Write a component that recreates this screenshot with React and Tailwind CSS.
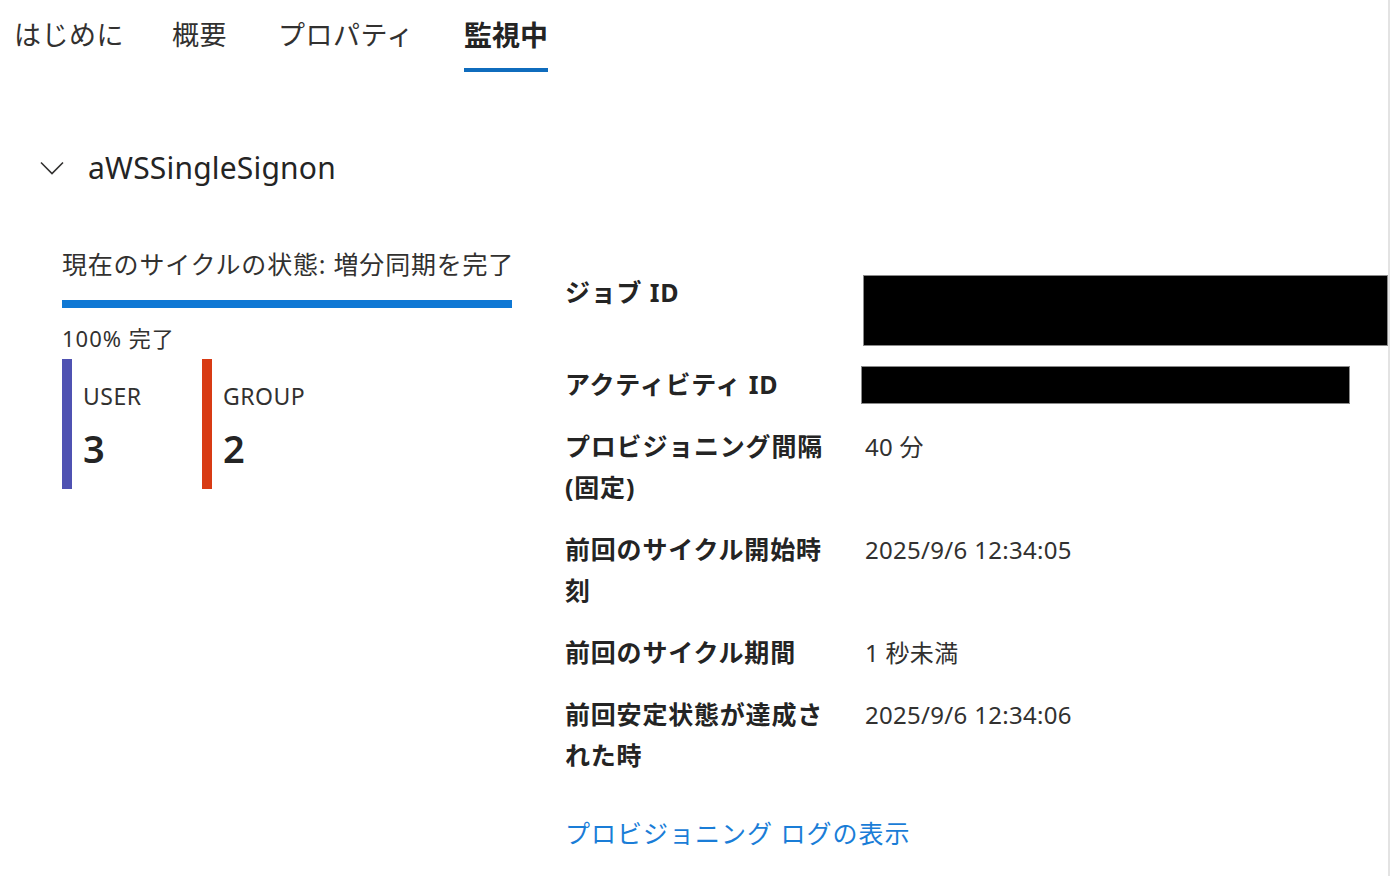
import React from 'react';

const TABS = [
  { label: 'はじめに', width: 'w-[108px]', active: false },
  { label: '概要', width: 'w-[56px]', active: false },
  { label: 'プロパティ', width: 'w-[136px]', active: false },
  { label: '監視中', width: 'w-[84px]', active: true }
];

const ROWS = [
  { label: 'ジョブ ID', redact: 'mt-[3px] -mb-[3px] h-[71px] w-[525px]' },
  { label: 'アクティビティ ID', redact: 'mt-[2px] h-[38px] w-[489px] -ml-[2px]' },
  { label: 'プロビジョニング間隔 (固定)', value: '40 分' },
  { label: '前回のサイクル開始時刻', value: '2025/9/6 12:34:05' },
  { label: '前回のサイクル期間', value: '1 秒未満' },
  { label: '前回安定状態が達成された時', value: '2025/9/6 12:34:06' }
];

function Stat({ name, count, color }) {
  return (
    <div className="flex w-[140px]">
      <div className={`h-[130px] w-[10px] ${color}`} />
      <div className="pl-[11px] pt-[21px]">
        <div className="text-[23px] leading-[32px] tracking-[0.5px]">{name}</div>
        <div className="mt-[13px] text-[38px] font-semibold leading-[46px] text-[#242424]">{count}</div>
      </div>
    </div>
  );
}

export default function App() {
  return (
    <div className="flex h-[876px] w-[1392px] overflow-hidden bg-white font-['Noto_Sans','Noto_Sans_CJK_JP',sans-serif] text-[#323130]">
      <div className="w-[1388px] shrink-0">
        <nav className="flex gap-[50px] pl-[14px]">
          {TABS.map((tab) => (
            <div key={tab.label} className={`flex flex-col pt-[17px] ${tab.width}`}>
              <span className={`whitespace-nowrap leading-[36px] ${tab.active ? 'text-[28px] font-bold text-[#242424]' : 'text-[27px] tracking-[0.5px]'}`}>{tab.label}</span>
              <span className={`mt-[15px] h-[4px] ${tab.active ? 'bg-[#0f6cbd]' : 'bg-transparent'}`} />
            </div>
          ))}
        </nav>

        <div className="mt-[76px] flex items-center pl-[40px]">
          <svg width="24" height="14" viewBox="0 0 24 14" fill="none" className="mr-[24px]">
            <path d="M1 1.5 L12 12.5 L23 1.5" stroke="#323130" strokeWidth="1.6" />
          </svg>
          <span className="text-[30px] leading-[40px] tracking-[0.2px] text-[#242424]">aWSSingleSignon</span>
        </div>

        <div className="mt-[58px] flex pl-[62px]">
          <section className="w-[450px] shrink-0">
            <div className="whitespace-nowrap text-[25px] leading-[36px] tracking-[0.8px]">現在のサイクルの状態: 増分同期を完了</div>
            <div className="mt-[18px] h-[8px] bg-[#0f78d4]" />
            <div className="mt-[15px] text-[22px] leading-[30px] tracking-[1px]">100% 完了</div>
            <div className="mt-[6px] flex">
              <Stat name="USER" count="3" color="bg-[#4f52b2]" />
              <Stat name="GROUP" count="2" color="bg-[#d83b14]" />
            </div>
          </section>

          <section className="ml-[53px] pt-[26px]">
            <div className="flex flex-col gap-[21px]">
              {ROWS.map((row) => (
                <div key={row.label} className="flex items-start">
                  <div className="w-[262px] shrink-0 text-[25px] font-bold leading-[41px] tracking-[0.8px] text-[#242424]">{row.label}</div>
                  <div className="ml-[36px]">
                    {row.redact ? (
                      <div className={`border border-[#8a8a8a] bg-black ${row.redact}`} />
                    ) : (
                      <div className="pl-[2px] text-[24px] leading-[41px] tracking-[0.3px]">{row.value}</div>
                    )}
                  </div>
                </div>
              ))}
            </div>
            <a href="#" className="mt-[37px] block text-[25px] leading-[41px] tracking-[1px] text-[#1a7dd7]">プロビジョニング ログの表示</a>
          </section>
        </div>
      </div>
      <div className="w-[2px] shrink-0 bg-[#e3e3e3]" />
    </div>
  );
}
